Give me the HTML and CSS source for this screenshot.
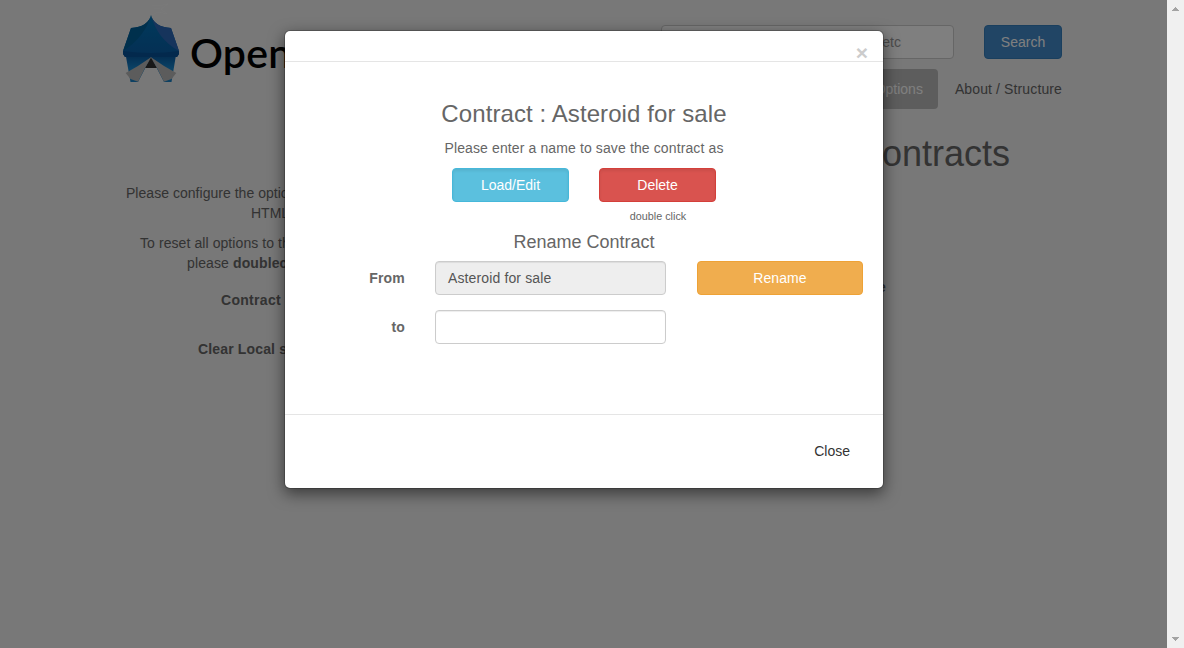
FILE: index.html
```html
<!DOCTYPE html>
<html lang="en">
<head>
<meta charset="utf-8">
<title>Contract options</title>
<link rel="stylesheet" href="styles.css">
</head>
<body>
<div class="window">
  <div class="page">
    <header class="header">
      <div class="brand">
        <svg class="logo" width="60" height="84" viewBox="0 0 60 84">
          <defs>
            <linearGradient id="roof" x1="0" y1="0" x2="0" y2="1"><stop offset="0" stop-color="#0075b8"/><stop offset="1" stop-color="#0a5ea8"/></linearGradient>
            <linearGradient id="wall" x1="0" y1="0" x2="0" y2="1"><stop offset="0" stop-color="#07589f"/><stop offset=".5" stop-color="#1585cc"/><stop offset="1" stop-color="#1a80c4"/></linearGradient>
          </defs>
          <path d="M31 15V5L37 6L47 4L40 9L46 14L37 12L31 15M33 9L39 8" fill="none" stroke="#fff" stroke-opacity=".4" stroke-width=".6"/>
          <path d="M4.7 55H55L50.5 82H43L30 57L17 82H9.5Z" fill="url(#wall)"/>
          <path d="M30 15Q33 27 50 28L58 51V54L56 57H4L2 54V51L10 28Q27 27 30 15Z" fill="url(#roof)"/>
          <path d="M30 15Q24 37 2 51L10 28Q27 27 30 15Z" fill="#00609a"/>
          <path d="M30 15Q33 27 50 28L58 51Q36 39 30 15Z" fill="#2c68b8"/>
          <path d="M2 51Q30 55 58 51V54L56 57H4L2 54Z" fill="#07529a"/>
          <path d="M30 57.300L36 68H24Z" fill="#303030"/>
          <path d="M30 57.300L24 68L17 81.700L9.500 79L4.700 73Q18 66 30 57.300Z" fill="#b8b8b8"/>
          <path d="M30 57.300L36 68L43 81.700L50.500 79L55.300 73Q42 66 30 57.300Z" fill="#b8b8b8"/>
        </svg>
        <span class="brand-name">Open</span>
      </div>
      <div class="tools">
        <div class="search-row">
          <div class="search-box">etc</div>
          <div class="search-button">Search</div>
        </div>
        <nav class="nav">
          <a class="nav-item nav-active">Options</a>
          <a class="nav-item nav-about">About / Structure</a>
        </nav>
      </div>
    </header>
    <main class="main">
      <h1 class="page-title">Contracts</h1>
      <div class="content">
        <div class="settings">
          <p class="line intro">Please configure the options</p>
          <p class="line html">HTML</p>
          <p class="line reset">To reset all options to the</p>
          <p class="line please">please <b>doubleclick</b></p>
          <p class="line label-contract">Contract</p>
          <p class="line label-clear">Clear Local storage</p>
        </div>
        <div class="value">e</div>
      </div>
    </main>
  </div>
  <div class="scrollbar">
    <svg width="17" height="17" viewBox="0 0 17 17"><path d="M5 11V10H6V9H7V8H8V7H9V8H10V9H11V10H12V11Z" fill="#a3a3a3"/></svg>
    <svg width="17" height="17" viewBox="0 0 17 17"><path d="M5 6H12V7H11V8H10V9H9V10H8V9H7V8H6V7H5Z" fill="#a3a3a3"/></svg>
  </div>
</div>
<div class="backdrop">
  <section class="modal">
    <div class="modal-header"><span class="close">×</span></div>
    <div class="modal-body">
      <h3 class="modal-title">Contract : Asteroid for sale</h3>
      <p class="hint">Please enter a name to save the contract as</p>
      <div class="actions">
        <div class="btn info">Load/Edit</div>
        <div class="delete-group">
          <div class="btn danger">Delete</div>
          <small class="small-note">double click</small>
        </div>
      </div>
      <h4 class="subtitle">Rename Contract</h4>
      <div class="form">
        <span class="form-label">From</span>
        <div class="field readonly">Asteroid for sale</div>
        <div class="btn warning">Rename</div>
        <span class="form-label">to</span>
        <div class="field"></div>
      </div>
    </div>
    <div class="modal-footer">Close</div>
  </section>
</div>
</body>
</html>
```
FILE: styles.css
```css
* { box-sizing: border-box; }
body {
  margin: 0;
  height: 648px;
  overflow: hidden;
  font: 14px/20px "Liberation Sans", Arial, sans-serif;
  color: #666;
}
h1, h3, h4, p { margin: 0; font-weight: normal; }
.window { display: flex; height: 648px; }
.page { width: 1167px; background: #f0f0f0; }
.scrollbar {
  width: 17px;
  background: #f0f0f0;
  display: flex;
  flex-direction: column;
  justify-content: space-between;
}
.scrollbar svg { display: block; }
.header {
  display: flex;
  justify-content: space-between;
  padding: 0 105px 0 121px;
  height: 134px;
}
.brand { display: flex; }
.logo { display: block; }
.brand-name {
  margin: 28px 0 0 9px;
  font: 600 41px/50px Lato, sans-serif;
  letter-spacing: .2px;
  color: #000;
}
.tools { padding-top: 25px; }
.search-row { display: flex; gap: 30px; }
.search-box {
  width: 293px;
  height: 34px;
  padding: 6px 52px;
  text-align: right;
  border: 1px solid #ccc;
  border-radius: 4px;
  background: #fff;
  color: #999;
}
.search-button {
  width: 78px;
  height: 34px;
  line-height: 32px;
  text-align: center;
  border: 1px solid #357ebd;
  border-radius: 4px;
  background: #428bca;
  color: #fff;
}
.nav { display: flex; justify-content: flex-end; gap: 17px; margin-top: 10px; }
.nav-item { line-height: 40px; color: #666; }
.nav-about { letter-spacing: .12px; }
.nav-active {
  padding: 0 15px;
  border-radius: 4px;
  background: #bbb;
  color: #fff;
}
.page-title {
  padding-right: 157px;
  text-align: right;
  font-size: 36px;
  line-height: 40px;
}
.content { display: flex; padding-top: 9px; }
.settings { width: 878px; }
.line { white-space: nowrap; }
.intro { padding-left: 126px; letter-spacing: .03px; }
.html { padding-left: 251px; }
.reset { padding: 10px 0 0 140px; letter-spacing: .08px; }
.please { padding-left: 187px; letter-spacing: .12px; }
.label-contract { padding: 17px 0 0 221px; font-weight: bold; letter-spacing: .3px; }
.label-clear { padding: 29px 0 0 198px; font-weight: bold; letter-spacing: .15px; }
.value { padding-top: 94px; font-weight: bold; }
.backdrop {
  position: absolute;
  top: 0;
  left: 0;
  width: 1167px;
  height: 648px;
  padding: 30px 0 0 284px;
  background: rgba(0, 0, 0, .5);
}
.modal {
  width: 600px;
  height: 459px;
  border: 1px solid rgba(0, 0, 0, .2);
  border-radius: 6px;
  background: #fff;
  background-clip: padding-box;
  box-shadow: 0 5px 15px rgba(0, 0, 0, .5);
}
.modal-header {
  height: 31px;
  padding: 11px 15px 0 0;
  text-align: right;
  border-bottom: 1px solid #e5e5e5;
}
.close { font-size: 21px; line-height: 21px; font-weight: bold; color: #ccc; }
.modal-body { height: 352px; padding-top: 39px; text-align: center; }
.modal-title { font-size: 24px; line-height: 26px; letter-spacing: .09px; }
.hint { margin-top: 11px; letter-spacing: .12px; }
.actions { display: flex; justify-content: center; gap: 30px; margin-top: 10px; }
.actions .btn { width: 117px; box-shadow: inset 0 2px 3px rgba(0, 0, 0, .07); }
.btn {
  height: 34px;
  line-height: 32px;
  border: 1px solid;
  border-radius: 4px;
  color: #fff;
}
.info { background: #5bc0de; border-color: #46b8da; }
.danger { background: #d9534f; border-color: #d43f3a; }
.warning { background: #f0ad4e; border-color: #eea236; }
.small-note { display: block; margin: 4px 0 0 1px; font-size: 10.8px; line-height: 20px; }
.subtitle { margin-top: 6px; font-size: 18px; line-height: 20px; }
.form {
  display: grid;
  grid-template-columns: 120px 231px 166px;
  column-gap: 30px;
  row-gap: 15px;
  margin-top: 9px;
}
.form .warning { margin-left: 1px; width: 166px; letter-spacing: .1px; }
.form-label { text-align: right; font-weight: bold; line-height: 34px; letter-spacing: .2px; }
.field {
  height: 34px;
  padding: 6px 12px;
  border: 1px solid #ccc;
  border-radius: 4px;
  box-shadow: inset 0 1px 1px rgba(0, 0, 0, .075);
  text-align: left;
  letter-spacing: .13px;
  color: #555;
}
.readonly { background: #eee; }
.modal-footer {
  height: 74px;
  padding: 26px 33px 0 0;
  border-top: 1px solid #e5e5e5;
  text-align: right;
  color: #333;
}
```
